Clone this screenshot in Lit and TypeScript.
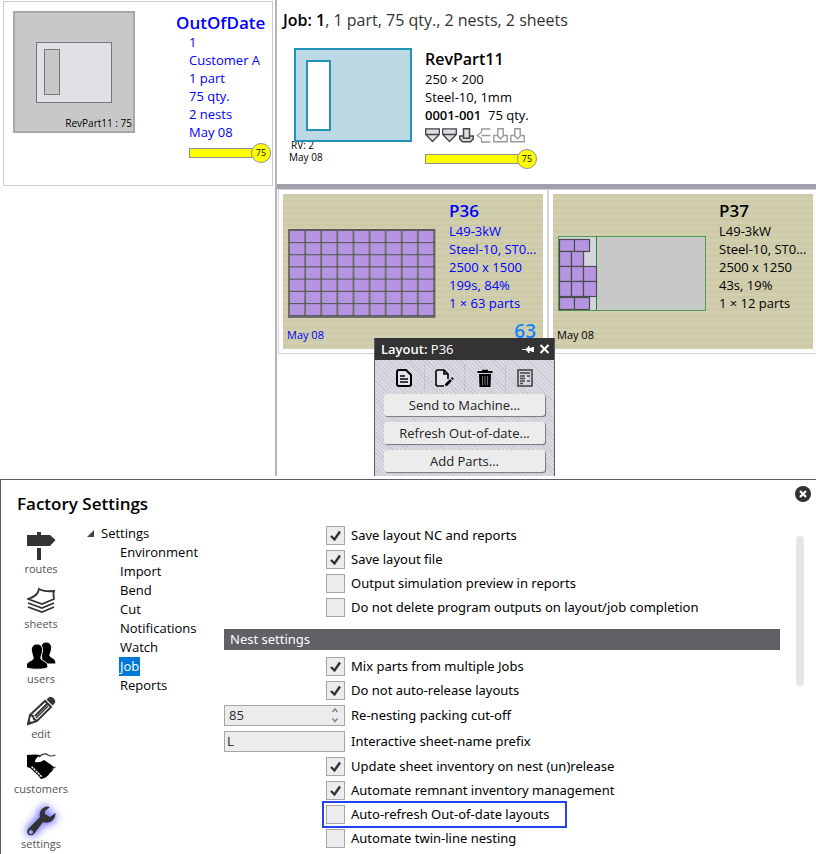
import { LitElement, html, svg, css } from "lit";
import { customElement, property, state } from "lit/decorators.js";
import { classMap } from "lit/directives/class-map.js";

type Nest = {
  name: string;
  machine: string;
  material: string;
  size: string;
  usage: string;
  parts: string;
  stale: boolean;
  count?: string;
};

type Option = { kind: "check" | "number" | "text" | "header"; label: string; on?: boolean; value?: string; marked?: boolean };

const nests: Nest[] = [
  { name: "P36", machine: "L49-3kW", material: "Steel-10, ST0...", size: "2500 x 1500", usage: "199s, 84%", parts: "1 × 63 parts", stale: true, count: "63" },
  { name: "P37", machine: "L49-3kW", material: "Steel-10, ST0...", size: "2500 x 1250", usage: "43s, 19%", parts: "1 × 12 parts", stale: false },
];

const options: Option[] = [
  { kind: "check", label: "Save layout NC and reports", on: true },
  { kind: "check", label: "Save layout file", on: true },
  { kind: "check", label: "Output simulation preview in reports" },
  { kind: "check", label: "Do not delete program outputs on layout/job completion" },
  { kind: "header", label: "Nest settings" },
  { kind: "check", label: "Mix parts from multiple Jobs", on: true },
  { kind: "check", label: "Do not auto-release layouts", on: true },
  { kind: "number", label: "Re-nesting packing cut-off", value: "85" },
  { kind: "text", label: "Interactive sheet-name prefix", value: "L" },
  { kind: "check", label: "Update sheet inventory on nest (un)release", on: true },
  { kind: "check", label: "Automate remnant inventory management", on: true },
  { kind: "check", label: "Auto-refresh Out-of-date layouts", marked: true },
  { kind: "check", label: "Automate twin-line nesting" },
];

const base = css`
  :host { display: block; font-family: "Open Sans", "Noto Sans", sans-serif; font-size: 13px; line-height: 18px; color: #000; }
  * { box-sizing: border-box; }
  h1, h2, h3, p, ul { margin: 0; padding: 0; font-weight: 400; }
  ul { list-style: none; }
  svg { display: block; }
  button { font: inherit; color: inherit; border: 0; padding: 0; background: none; cursor: pointer; }
`;

@customElement("quantity-bar")
export class QuantityBar extends LitElement {
  @property() value = "";
  static styles = [base, css`
    :host { display: flex; align-items: center; }
    .bar { flex: 1; height: 10px; background: #ff0; border: 1px solid #8f8f8f; margin-right: -10px; }
    .knob { position: relative; width: 20px; height: 20px; border-radius: 50%; background: #ff0; border: 1px solid #8f8f8f; font-size: 9px; line-height: 18px; text-align: center; }
  `];
  render() {
    return html`<div class="bar"></div><div class="knob">${this.value}</div>`;
  }
}

@customElement("job-browser")
export class JobBrowser extends LitElement {
  static styles = [base, css`
    .split { display: flex; overflow: hidden; }
    .jobs { flex: none; width: 277px; border-right: 2px solid #b4b4bc; padding: 1px 3px; }
    .job { display: flex; justify-content: space-between; width: 270px; height: 185px; border: 1px solid #ccc; padding: 9px 0 0 9px; color: #00f; }
    .thumb { display: flex; flex-direction: column; justify-content: space-between; width: 122px; height: 122px; background: #c8c8c8; border: 2px solid #a8a8a8; color: #000; }
    .thumb svg { margin: 29px 0 0 21px; }
    .caption { font-size: 10px; line-height: 16px; text-align: right; padding-right: 1px; }
    .job h2 { font-size: 17px; line-height: 24px; font-weight: 600; }
    .jobtext { width: 96px; }
    .facts { padding-left: 13px; margin-top: -2px; }
    .jobtext quantity-bar { margin: 2px 0 0 13px; width: 82px; }

    .detail { flex: 1; min-width: 0; }
    .head { padding: 8px 6px 0; }
    .head h1 { font-size: 16px; line-height: 24px; color: #333; white-space: nowrap; }
    .head b { color: #000; font-weight: 600; }
    .part { display: flex; gap: 13px; padding: 16px 0 0 11px; height: 152px; }
    .shape { position: relative; z-index: 1; }
    .stamp { font-size: 10px; line-height: 12px; margin: -3px 0 0 -5px; }
    .stamp p:first-child { padding-left: 2px; }
    .part h2 { font-size: 16px; line-height: 22px; font-weight: 600; }
    .part b { font-weight: 600; }
    .icons { display: flex; gap: 2px; padding: 4px 0 6px; }
    .part quantity-bar { width: 112px; }

    .nests { position: relative; display: flex; border-top: 5px solid #a0a0ab; padding: 0 0 122px 1px; }
    .nest { flex: none; width: 270px; border: 1px solid #d4d4d8; padding: 4px; }
    .sheet { display: flex; height: 155px; padding-left: 5px; gap: 13px; background: repeating-linear-gradient(#cccaa7 0 3px, #d1cfb0 3px 6px); }
    .preview { position: relative; width: 148px; display: flex; align-items: center; padding-top: 4px; }
    .date { position: absolute; left: -1px; bottom: 5px; font-size: 11px; line-height: 18px; }
    .sheettext { flex: 1; min-width: 0; white-space: nowrap; padding-top: 5px; }
    .sheettext h3 { font-size: 17px; line-height: 24px; font-weight: 600; margin-bottom: -1px; }
    .count { font-size: 19px; line-height: 20px; font-weight: 600; color: #1a84f5; text-align: right; padding: 9px 7px 0 0; }
    .stale { color: #00f; }

    .menu { position: absolute; left: 97px; top: 149px; width: 181px; border: 1px solid #5c5c64; border-top: 0; }
    .bar { display: flex; align-items: center; gap: 4px; height: 22px; background: #333; color: #fff; padding: 0 4px 0 6px; font-size: 13px; }
    .bar h2 { flex: 1; font-size: 13px; line-height: 20px; }
    .bar b { font-weight: 600; }
    .body { padding: 5px 9px; background: repeating-linear-gradient(45deg, #c9c9d2 0 1px, #dadae2 1px 3px); }
    .tools { display: flex; margin-bottom: 3px; }
    .tools button { flex: 1; height: 26px; display: grid; place-items: center; border-right: 1px dotted #b4b4bc; }
    .tools button:last-child { border-right: 0; }
    .action { display: block; width: 100%; height: 22px; margin-bottom: 6px; background: #ececec; border-radius: 3px; box-shadow: 1px 1px 1px #777; color: #222; font-size: 13px; line-height: 20px; }
  `];

  private fullSheet() {
    const cells = [];
    for (let r = 0; r < 7; r++) for (let c = 0; c < 9; c++) {
      cells.push(svg`<rect x=${2 + c * 16.1} y=${2 + r * 12.2} width="14.2" height="11" fill="#b595e2"/>`);
    }
    return html`<svg width="148" height="89" viewBox="0 0 148 89"><rect width="147.500" height="89" fill="#6e6e6c"/><g stroke="#4a4a4a">${[1, 13, 25.200, 37.500, 49.700, 62, 74, 86.500].map((y) => svg`<path d="M1 ${y}H147"/>`)}</g>${cells}</svg>`;
  }

  private partSheet() {
    const cells = [
      [1, 3, 15, 12], [16, 3, 15, 12],
      [1, 15, 12, 15], [13, 15, 12, 15],
      [1, 30, 12, 15], [13, 30, 12, 15], [25, 30, 13, 15],
      [1, 45, 12, 15], [13, 45, 12, 15], [25, 45, 13, 15],
      [1, 61, 15, 12], [16, 61, 15, 12],
    ];
    return html`<svg width="148" height="75" viewBox="0 0 148 75"><rect x=".5" y=".5" width="147" height="74" fill="#c8c8c8" stroke="#4f9a4f"/><rect x="1" y="1" width="37" height="73" fill="#d4d4dc"/><path d="M38.500 0V74" stroke="#1c8c2c"/>${cells.map(([x, y, w, h]) => svg`<rect x=${x + 0.5} y=${y + 0.5} width=${w} height=${h} fill="#b595e2" stroke="#4c4c50" stroke-width="1.200"/>`)}</svg>`;
  }

  private nestCard(n: Nest) {
    return html`<article class="nest"><div class=${classMap({ sheet: true, stale: n.stale })}>
      <div class="preview">${n.stale ? this.fullSheet() : this.partSheet()}<span class="date">May 08</span></div>
      <div class="sheettext"><h3>${n.name}</h3><p>${n.machine}</p><p>${n.material}</p><p>${n.size}</p><p>${n.usage}</p><p>${n.parts}</p>
      ${n.count ? html`<p class="count">${n.count}</p>` : ""}</div>
    </div></article>`;
  }

  render() {
    return html`<div class="split">
      <aside class="jobs"><article class="job">
        <div class="thumb">
          <svg width="76" height="61" viewBox="0 0 76 61"><rect x=".5" y=".5" width="75" height="60" fill="#e0e1e7" stroke="#777"/><rect x="8.500" y="7.500" width="15" height="45" fill="#c8c8c8" stroke="#777"/></svg>
          <p class="caption">RevPart11 : 75</p>
        </div>
        <div class="jobtext"><h2>OutOfDate</h2>
          <div class="facts"><p>1</p><p>Customer A</p><p>1 part</p><p>75 qty.</p><p>2 nests</p><p>May 08</p></div>
          <quantity-bar value="75"></quantity-bar>
        </div>
      </article></aside>
      <main class="detail">
        <header class="head"><h1><b>Job: 1</b>, 1 part, 75 qty., 2 nests, 2 sheets</h1>
          <div class="part">
            <div>
              <svg class="shape" width="118" height="94" viewBox="0 0 118 94"><rect x="1" y="1" width="116" height="92" fill="#bcd8e5" stroke="#2294b8" stroke-width="2"/><rect x="13" y="13" width="23" height="69" fill="#fff" stroke="#2294b8" stroke-width="2"/></svg>
              <div class="stamp"><p>RV: 2</p><p>May 08</p></div>
            </div>
            <div><h2>RevPart11</h2><p>250 × 200</p><p>Steel-10, 1mm</p><p><b>0001-001</b>&nbsp; 75 qty.</p>
              <div class="icons">
                ${[0, 1].map(() => html`<svg width="15" height="15" viewBox="0 0 15 15" fill="#dcdce4" stroke="#444" stroke-width="1.300"><path d="M.7 .8H14.300V6.500L7.500 13.500L.7 6.500ZM.7 6.500H14.300"/></svg>`)}
                <svg width="15" height="15" viewBox="0 0 15 15" fill="#dcdce4" stroke="#444" stroke-width="1.500"><path d="M4.500 8H.8V11L3.500 13.800H11.500L14.200 11V8H10.500"/><path d="M4.500 .8H10.500V10.200H4.500Z"/></svg>
                <svg width="15" height="15" viewBox="0 0 15 15" fill="#fff" stroke="#999" stroke-width="1.300"><path d="M14.300 1H5.500V4.500L1 7.500L5.500 10.500V14H14.300M5.500 7.500H14.300"/></svg>
                ${[0, 1].map(() => html`<svg width="15" height="15" viewBox="0 0 15 15" fill="#fff" stroke="#999" stroke-width="1.400"><path d="M4.500 7.500H.8V13.800H14.200V7.500H10.500"/><path d="M4.800 .8H10.200V8L7.500 11L4.800 8Z"/></svg>`)}
              </div>
              <quantity-bar value="75"></quantity-bar>
            </div>
          </div>
        </header>
        <section class="nests">${nests.map((n) => this.nestCard(n))}
          <div class="menu">
            <div class="bar"><h2><b>Layout:</b> P36</h2>
              <button aria-label="Pin"><svg width="13" height="9" viewBox="0 0 13 9" fill="#fff"><path d="M0 4H4.500V2.500H6V1H7.500V3H9.500V2H12V7H9.500V6H7.500V8H6V6.500H4.500V5H0Z"/></svg></button>
              <button aria-label="Close"><svg width="11" height="10" viewBox="0 0 11 10" stroke="#fff" stroke-width="2"><path d="M1.500 1L9.500 9M9.500 1L1.500 9"/></svg></button>
            </div>
            <div class="body">
              <div class="tools">
                <button aria-label="Report"><svg width="16" height="18" viewBox="0 0 16 18" fill="#e4e4ea" stroke="#000" stroke-width="2"><path d="M3 1H10L15 6V15Q15 17 13 17H3Q1 17 1 15V3Q1 1 3 1Z"/><path d="M4 7H9M4 10H12M4 13H12" stroke-width="1.500"/></svg></button>
                <button aria-label="Edit"><svg width="19" height="18" viewBox="0 0 19 18" fill="none" stroke="#000" stroke-width="1.600"><path fill="#e4e4ea" d="M9 17H3Q1 17 1 15V3Q1 1 3 1H9L13 5V10M9 1V5H13"/><path d="M10.500 16.500L16 11" stroke-width="2.600"/><path d="M16.800 10.200L18 9" stroke-width="2.600"/></svg></button>
                <button aria-label="Delete"><svg width="16" height="18" viewBox="0 0 16 18"><path d="M5 2V.8H11V2H15.500V4H.5V2ZM2 5H14L13.500 18H2.500Z"/><path d="M5.500 7V16M8 7V16M10.500 7V16" stroke="#777"/></svg></button>
                <button aria-label="Details"><svg width="16" height="18" viewBox="0 0 16 18" fill="none" stroke="#444"><rect x="1" y="1" width="14" height="16" stroke-width="1.600"/><path d="M3 4H13M3 7H8M10 7H13M3 9.500H8M3 12H8M10 12H13M3 14.500H6" stroke-width="1.400"/></svg></button>
              </div>
              <button class="action">Send to Machine...</button>
              <button class="action">Refresh Out-of-date...</button>
              <button class="action">Add Parts...</button>
            </div>
          </div>
        </section>
      </main>
    </div>`;
  }
}

@customElement("factory-settings")
export class FactorySettings extends LitElement {
  @state() private active = "Job";

  static styles = [base, css`
    .panel { position: relative; border: solid #5c5c64; border-width: 1px 0 0 1px; padding: 11px 12px 0 16px; }
    .title { font-size: 17px; line-height: 26px; font-weight: 600; }
    .close { position: absolute; top: 6px; right: 5px; }
    .cols { display: flex; }
    .nav { width: 50px; margin-left: -1px; padding-top: 14px; }
    .nav li { height: 55px; }
    .nav button { width: 100%; display: flex; flex-direction: column; align-items: center; gap: 1px; font-size: 11px; line-height: 14px; color: #555; }
    .nav .on svg { filter: drop-shadow(0 0 4px #7a7aff) drop-shadow(0 0 3px #8a8aff); overflow: visible; }
    .tree { flex: none; width: 158px; padding: 7px 0 0 21px; line-height: 19px; }
    .root { display: flex; align-items: center; gap: 7px; }
    .tree ul ul { padding-left: 33px; }
    .tree a { color: inherit; text-decoration: none; display: inline-block; padding: 0 1px; margin-left: -1px; }
    .tree a.sel { background: #0078d7; color: #fff; }
    .form { flex: 1; min-width: 0; padding-top: 6px; font-family: "Noto Sans", "Open Sans", sans-serif; }
    .row { display: grid; grid-template-columns: 121px 1fr; gap: 6px; align-items: center; height: 24px; }
    .row input[type="checkbox"] { justify-self: end; }
    .field { height: 26px; }
    .legend { margin: 10px 0 4px; height: 21px; line-height: 21px; background: #606066; color: #fff; padding-left: 6px; font-size: 13px; }
    input[type="checkbox"] { appearance: none; width: 19px; height: 19px; margin: 0; border: 1px solid #a6a6a6; background: #ececec; }
    input[type="checkbox"]:checked { background: #ececec url("data:image/svg+xml,%3Csvg xmlns='http://www.w3.org/2000/svg' viewBox='0 0 17 17'%3E%3Cpath d='M4 9L7.500 12.500L13 4.500' fill='none' stroke='%23333' stroke-width='2.400'/%3E%3C/svg%3E"); }
    .box { display: flex; width: 121px; height: 21px; border: 1px solid #a6a6a6; background: #ececec; }
    .box input { flex: 1; min-width: 0; border: 0; background: none; font: inherit; color: #333; padding: 0 4px; appearance: textfield; outline: 0; }
    .box .prefix { padding: 0 2px; }
    input::-webkit-inner-spin-button { appearance: none; }
    .spin { flex: none; }
    .marked { position: relative; }
    .marked::after { content: ""; position: absolute; inset: -1px auto -2px 98px; width: 241px; border: 2px solid #2343ee; pointer-events: none; }
    .scroll { flex: none; width: 8px; height: 150px; margin: 19px 0 0 16px; border-radius: 4px; background: #e6e6e6; }
  `];

  private navItems() {
    return [
      { name: "routes", art: svg`<path fill="#333" d="M10 1H14V4H23L28.500 9L23 15H0V4H10ZM10 17H14V29H10Z"/>` },
      { name: "sheets", art: svg`<g fill="none" stroke="#333" stroke-width="1.800"><path d="M12 3Q17 6 27 5Q26 8 27 13L15 18L1 13Q11 10 12 3Z"/><path d="M1 17L15 22L27 17M1 21L15 26L27 21"/></g>` },
      { name: "users", art: svg`<g stroke="#fff"><path d="M19 1C23 1 25 4 24.500 8C24 12 22.500 13 23 15C24 17 29 17 29 23H15L14 5C15 2 17 1 19 1Z"/><path d="M10 3C14 3 16 6 15.500 10C15 14 13.500 15 14 18C15 20 21 20 21 26C21 29 -1 29 -1 26C-1 20 5 20 6 18C6.500 15 5 14 4.500 10C4 6 6 3 10 3Z"/></g>` },
      { name: "edit", art: svg`<path fill="none" stroke="#333" stroke-width="2" d="M1 28L3 19L18 5L24 11L10 25ZM3 19L6 20L7 23L10 25M8 20L20 8"/><path fill="none" stroke="#333" stroke-width="1.500" d="M9 22L21 10"/><path fill="#333" d="M19.500 3.500L22 1.200Q24 0 27 2.500Q29 5 28 7L25.500 9.500Z"/><path fill="#333" d="M0 29L2 24L5 27Z"/>` },
      { name: "customers", art: svg`<path d="M0 4Q8 3 14 4Q8 7 8 11Q13 12 17 9Q22 12 27 16Q26 20 23 22Q20 27 14 28L3 17L0 16Z"/><path fill="none" stroke="#333" stroke-width="1.200" d="M12 6Q17 1 21 4Q24 6 28.500 4M24 18L28.500 16"/><path stroke="#fff" stroke-width="1.500" stroke-linecap="round" stroke-dasharray="1 2" d="M3 18L12 26M5 16L15 26"/>` },
      { name: "settings", art: svg`<path fill="#333" fill-rule="evenodd" d="M23 1Q18 -1 14 4Q12 7 13 11L1 23Q-1 27 2 29Q5 30 7 28L16 16Q22 18 26 14Q29 11 28.500 7L23 11L18 8V5ZM4 24A2 2 0 1 1 4 28A2 2 0 1 1 4 24Z"/>` },
    ];
  }

  private option(o: Option, i: number) {
    if (o.kind === "header") return html`<h2 class="legend">${o.label}</h2>`;
    const id = `opt${i}`;
    if (o.kind === "check")
      return html`<div class=${classMap({ row: true, marked: !!o.marked })}><input type="checkbox" id=${id} .checked=${!!o.on} /><label for=${id}>${o.label}</label></div>`;
    return html`<div class="row field"><div class="box">
      <input class=${o.kind === "text" ? "prefix" : ""} type=${o.kind} id=${id} .value=${o.value ?? ""} />
      ${o.kind === "number" ? html`<svg class="spin" width="14" height="19" viewBox="0 0 14 19" fill="none" stroke="#888" stroke-width="1.600"><path d="M2.500 6L5 3L7.500 6M2.500 12.500L5 15.500L7.500 12.500"/></svg>` : ""}
      </div><label for=${id}>${o.label}</label></div>`;
  }

  render() {
    const items = ["Environment", "Import", "Bend", "Cut", "Notifications", "Watch", "Job", "Reports"];
    return html`<section class="panel">
      <h1 class="title">Factory Settings</h1>
      <button class="close" aria-label="Close"><svg width="16" height="16" viewBox="0 0 16 16"><circle cx="8" cy="8" r="8" fill="#333"/><path d="M5 5L11 11M11 5L5 11" stroke="#fff" stroke-width="2.200"/></svg></button>
      <div class="cols">
        <nav><ul class="nav">${this.navItems().map((n) => html`<li><button class=${n.name === "settings" ? "on" : ""}><svg width="29" height="30" viewBox="0 0 29 30">${n.art}</svg>${n.name}</button></li>`)}</ul></nav>
        <div class="tree"><ul><li><span class="root"><svg width="7" height="7" viewBox="0 0 7 7"><path d="M7 0V7H0Z" fill="#444"/></svg>Settings</span>
          <ul>${items.map((t) => html`<li><a href="#" class=${t === this.active ? "sel" : ""} @click=${(e: Event) => { e.preventDefault(); this.active = t; }}>${t}</a></li>`)}</ul></li></ul></div>
        <form class="form">${options.map((o, i) => this.option(o, i))}</form>
        <div class="scroll"></div>
      </div>
    </section>`;
  }
}

@customElement("app-root")
export class AppRoot extends LitElement {
  static styles = [base, css`
    :host { background: #fff; min-height: 100vh; overflow: hidden; }
    factory-settings { margin-top: 3px; }
  `];
  render() {
    return html`<job-browser></job-browser><factory-settings></factory-settings>`;
  }
}
